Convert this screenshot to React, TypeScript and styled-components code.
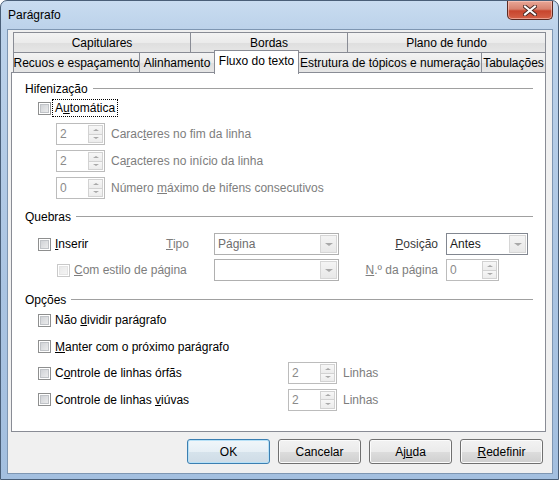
import React from "react";
import styled, { createGlobalStyle } from "styled-components";

const GlobalStyle = createGlobalStyle`
  html, body {
    margin: 0;
    padding: 0;
    background: #fff;
  }
  body {
    font-family: "Liberation Sans", Arial, sans-serif;
    font-size: 12px;
    color: #000;
  }
`;

const Window = styled.div`
  width: 559px;
  height: 480px;
  box-sizing: border-box;
  border: 1px solid #4a5f78;
  border-radius: 7px 7px 0 0;
  background: linear-gradient(180deg, #c9dcf0 0px, #bcd2ea 28px, #aac4e2 60%, #a3bfdf 100%);
  display: flex;
  flex-direction: column;
  overflow: hidden;
`;

const TitleBar = styled.div`
  height: 28px;
  flex: none;
  display: flex;
  justify-content: space-between;
  align-items: flex-start;
`;

const Title = styled.span`
  padding: 7px 0 0 7px;
  font-size: 12px;
  color: #000;
`;

const CloseButton = styled.div`
  width: 46px;
  height: 19px;
  margin-right: 5px;
  box-sizing: border-box;
  border: 1px solid #5b2a22;
  border-top: none;
  border-radius: 0 0 5px 5px;
  background: linear-gradient(180deg, #e9a797 0%, #d7826f 45%, #c8452d 55%, #d46148 100%);
  box-shadow: inset 0 0 0 1px rgba(255, 210, 200, 0.55);
  display: flex;
  align-items: center;
  justify-content: center;
`;

const Client = styled.div`
  margin-left: 6px;
  width: 546px;
  height: 445px;
  box-sizing: border-box;
  border: 1px solid #7e96b2;
  background: #f0f0f0;
  padding: 2px 0 0 3px;
  display: flex;
  flex-direction: column;
`;

const TabStrip = styled.div`
  margin-left: 2px;
  width: 533px;
  display: flex;
  flex-direction: column;
`;

const TabRow = styled.div`
  display: flex;
  align-items: flex-start;
  & + & {
    margin-top: -1px;
  }
`;

const Tab = styled.div<{ $w: number; $active?: boolean }>`
  width: ${(p) => p.$w}px;
  height: ${(p) => (p.$active ? 24 : 21)}px;
  box-sizing: border-box;
  flex: none;
  border: 1px solid #898c95;
  border-bottom: ${(p) => (p.$active ? "none" : "1px solid #898c95")};
  background: ${(p) =>
    p.$active ? "#fff" : "linear-gradient(180deg, #f3f3f3 0%, #ebebeb 50%, #dedede 51%, #e6e6e6 100%)"};
  margin-top: ${(p) => (p.$active ? -2 : 0)}px;
  margin-bottom: ${(p) => (p.$active ? -1 : 0)}px;
  position: relative;
  z-index: ${(p) => (p.$active ? 2 : 1)};
  display: flex;
  align-items: ${(p) => (p.$active ? "flex-start" : "center")};
  padding-top: ${(p) => (p.$active ? 3 : 0)}px;
  justify-content: center;
  white-space: nowrap;
  & + & {
    margin-left: -1px;
  }
`;

const Panel = styled.div`
  margin-top: -1px;
  width: 535px;
  height: 360px;
  box-sizing: border-box;
  border: 1px solid #898c95;
  background: #fff;
  padding: 7px 12px 0 13px;
  display: flex;
  flex-direction: column;
`;

const Header = styled.div<{ $top: number }>`
  margin-top: ${(p) => p.$top}px;
  height: 15px;
  display: flex;
  align-items: center;
  &::after {
    content: "";
    flex: 1;
    margin-left: 5px;
    border-top: 1px solid #a0a0a0;
  }
`;

const CheckRow = styled.div<{ $top: number; $indent?: number }>`
  margin-top: ${(p) => p.$top}px;
  margin-left: ${(p) => p.$indent ?? 13}px;
  height: 22px;
  display: flex;
  align-items: center;
`;

const CheckBox = styled.span<{ $disabled?: boolean }>`
  width: 13px;
  height: 13px;
  box-sizing: border-box;
  flex: none;
  border: 1px solid ${(p) => (p.$disabled ? "#c9c9c9" : "#8e8f8f")};
  background: ${(p) =>
    p.$disabled
      ? "linear-gradient(135deg, #e6e6e6, #f7f7f7)"
      : "linear-gradient(135deg, #c9ccd1, #f2f2f2)"};
  box-shadow: inset 0 0 0 1px #fff, inset 0 0 0 2px ${(p) => (p.$disabled ? "#e4e4e4" : "#c0c3c7")};
  margin-right: 4px;
`;

const Label = styled.span<{ $gray?: boolean; $w?: number }>`
  color: ${(p) => (p.$gray ? "#7d7d7d" : "#000")};
  white-space: nowrap;
  width: ${(p) => (p.$w ? `${p.$w}px` : "auto")};
  flex: none;
`;

const Focus = styled.span`
  outline: 1px dotted #000;
  outline-offset: 1px;
  padding: 0 1px;
  margin-left: -1px;
`;

const SpinRow = styled.div<{ $top: number }>`
  margin-top: ${(p) => p.$top}px;
  margin-left: 31px;
  height: 22px;
  display: flex;
  align-items: center;
  gap: 6px;
`;

const SpinBox = styled.div<{ $w?: number }>`
  width: ${(p) => p.$w ?? 49}px;
  height: 22px;
  box-sizing: border-box;
  flex: none;
  border: 1px solid #bcbcbc;
  background: #fff;
  display: flex;
`;

const SpinValue = styled.span`
  flex: 1;
  padding-left: 3px;
  line-height: 20px;
  color: #8a8a8a;
`;

const SpinButtons = styled.div`
  width: 15px;
  padding: 1px 1px 1px 0;
  display: flex;
  flex-direction: column;
`;

const SpinButton = styled.div`
  flex: 1;
  box-sizing: border-box;
  border: 1px solid #d2d2d2;
  background: linear-gradient(180deg, #f7f7f7, #ececec);
  display: flex;
  align-items: center;
  justify-content: center;
  & + & {
    margin-top: -1px;
  }
`;

const Tri = styled.span<{ $up?: boolean; $size?: number }>`
  width: 0;
  height: 0;
  border-left: ${(p) => p.$size ?? 3}px solid transparent;
  border-right: ${(p) => p.$size ?? 3}px solid transparent;
  ${(p) =>
    p.$up
      ? `border-bottom: ${(p.$size ?? 3) - 1}px solid #a8a8a8;`
      : `border-top: ${(p.$size ?? 3) - 1}px solid #a8a8a8;`}
`;

const BreakGrid = styled.div`
  margin-top: 9px;
  margin-left: 13px;
  display: grid;
  grid-template-columns: 128px 48px 125px 107px 82px;
  grid-auto-rows: 22px;
  row-gap: 4px;
  align-items: center;
`;

const Cell = styled.div<{ $right?: boolean; $indent?: number }>`
  display: flex;
  align-items: center;
  justify-content: ${(p) => (p.$right ? "flex-end" : "flex-start")};
  padding-right: ${(p) => (p.$right ? 8 : 0)}px;
  padding-left: ${(p) => p.$indent ?? 0}px;
  height: 22px;
`;

const Select = styled.div<{ $enabled?: boolean }>`
  height: 22px;
  box-sizing: border-box;
  width: 100%;
  border: 1px solid ${(p) => (p.$enabled ? "#828790" : "#b0b0b0")};
  background: #fff;
  display: flex;
`;

const SelectValue = styled.span<{ $enabled?: boolean }>`
  flex: 1;
  padding-left: 3px;
  line-height: 20px;
  color: ${(p) => (p.$enabled ? "#1a1a1a" : "#6d6d6d")};
`;

const SelectArrow = styled.span`
  width: 17px;
  margin: 1px;
  box-sizing: border-box;
  border: 1px solid #d6d6d6;
  background: linear-gradient(180deg, #f4f4f4, #e8e8e8);
  display: flex;
  align-items: center;
  justify-content: center;
`;

const OptionRow = styled.div<{ $top: number }>`
  margin-top: ${(p) => p.$top}px;
  margin-left: 13px;
  height: 22px;
  display: flex;
  align-items: center;
`;

const UnitLabel = styled.span`
  margin-left: 6px;
  color: #7d7d7d;
`;

const ButtonRow = styled.div`
  margin-top: 7px;
  padding-right: 9px;
  display: flex;
  justify-content: flex-end;
  gap: 8px;
`;

const Button = styled.button<{ $default?: boolean }>`
  width: 83px;
  height: 25px;
  box-sizing: border-box;
  border: 1px solid ${(p) => (p.$default ? "#3c7fb1" : "#707070")};
  border-radius: 3px;
  background: ${(p) =>
    p.$default
      ? "linear-gradient(180deg, #f0f6fa 0%, #e6eff5 50%, #d6e3ec 51%, #cfdce6 100%)"
      : "linear-gradient(180deg, #f2f2f2 0%, #ebebeb 50%, #dddddd 51%, #cfcfcf 100%)"};
  box-shadow: inset 0 0 0 1px ${(p) => (p.$default ? "#b7e1f7" : "#fbfbfb")};
  font-family: inherit;
  font-size: 12px;
  color: #000;
  padding: 0;
`;

const Spinner = ({ value, w }: { value: string; w?: number }) => (
  <SpinBox $w={w}>
    <SpinValue>{value}</SpinValue>
    <SpinButtons>
      <SpinButton>
        <Tri $up />
      </SpinButton>
      <SpinButton>
        <Tri />
      </SpinButton>
    </SpinButtons>
  </SpinBox>
);

const Dropdown = ({ value, enabled }: { value: string; enabled?: boolean }) => (
  <Select $enabled={enabled}>
    <SelectValue $enabled={enabled}>{value}</SelectValue>
    <SelectArrow>
      <Tri $size={4} />
    </SelectArrow>
  </Select>
);

export default function App() {
  return (
    <>
      <GlobalStyle />
      <Window>
        <TitleBar>
          <Title>Parágrafo</Title>
          <CloseButton>
            <svg width="14" height="11" viewBox="0 0 14 11">
              <path d="M2 1.5 L12 9.5 M12 1.5 L2 9.5" stroke="#4a2a25" strokeWidth="4" strokeLinecap="square" />
              <path d="M2 1.5 L12 9.5 M12 1.5 L2 9.5" stroke="#fff" strokeWidth="2" strokeLinecap="square" />
            </svg>
          </CloseButton>
        </TitleBar>
        <Client>
          <TabStrip>
            <TabRow>
              <Tab $w={178}>Capitulares</Tab>
              <Tab $w={158}>Bordas</Tab>
              <Tab $w={199}>Plano de fundo</Tab>
            </TabRow>
            <TabRow>
              <Tab $w={127}>Recuos e espaçamento</Tab>
              <Tab $w={76}>Alinhamento</Tab>
              <Tab $w={85} $active>
                Fluxo do texto
              </Tab>
              <Tab $w={184}>Estrutura de tópicos e numeração</Tab>
              <Tab $w={65}>Tabulações</Tab>
            </TabRow>
          </TabStrip>
          <Panel>
            <Header $top={1}>Hifenização</Header>
            <CheckRow $top={1}>
              <CheckBox />
              <Focus>
                A<u>u</u>tomática
              </Focus>
            </CheckRow>
            <SpinRow $top={4}>
              <Spinner value="2" />
              <Label $gray>
                Carac<u>t</u>eres no fim da linha
              </Label>
            </SpinRow>
            <SpinRow $top={5}>
              <Spinner value="2" />
              <Label $gray>
                Ca<u>r</u>acteres no início da linha
              </Label>
            </SpinRow>
            <SpinRow $top={5}>
              <Spinner value="0" />
              <Label $gray>
                Número <u>m</u>áximo de hifens consecutivos
              </Label>
            </SpinRow>
            <Header $top={10}>Quebras</Header>
            <BreakGrid>
              <Cell>
                <CheckBox />
                <Label>
                  <u>I</u>nserir
                </Label>
              </Cell>
              <Cell>
                <Label $gray>
                  <u>T</u>ipo
                </Label>
              </Cell>
              <Dropdown value="Página" />
              <Cell $right>
                <Label style={{ color: "#3a3a3a" }}>
                  <u>P</u>osição
                </Label>
              </Cell>
              <Dropdown value="Antes" enabled />
              <Cell $indent={19}>
                <CheckBox $disabled />
                <Label $gray>
                  <u>C</u>om estilo de página
                </Label>
              </Cell>
              <Cell />
              <Dropdown value="" />
              <Cell $right>
                <Label $gray>
                  <u>N</u>.º da página
                </Label>
              </Cell>
              <Cell>
                <Spinner value="0" w={53} />
              </Cell>
            </BreakGrid>
            <Header $top={11}>Opções</Header>
            <OptionRow $top={2}>
              <CheckBox />
              <Label>
                Não <u>d</u>ividir parágrafo
              </Label>
            </OptionRow>
            <OptionRow $top={4.5}>
              <CheckBox />
              <Label>
                <u>M</u>anter com o próximo parágrafo
              </Label>
            </OptionRow>
            <OptionRow $top={4.5}>
              <CheckBox />
              <Label $w={233}>
                C<u>o</u>ntrole de linhas órfãs
              </Label>
              <Spinner value="2" />
              <UnitLabel>Linhas</UnitLabel>
            </OptionRow>
            <OptionRow $top={4.5}>
              <CheckBox />
              <Label $w={233}>
                Controle de linhas <u>v</u>iúvas
              </Label>
              <Spinner value="2" />
              <UnitLabel>Linhas</UnitLabel>
            </OptionRow>
          </Panel>
          <ButtonRow>
            <Button $default>OK</Button>
            <Button>Cancelar</Button>
            <Button>
              Aj<u>u</u>da
            </Button>
            <Button>
              <u>R</u>edefinir
            </Button>
          </ButtonRow>
        </Client>
      </Window>
    </>
  );
}
